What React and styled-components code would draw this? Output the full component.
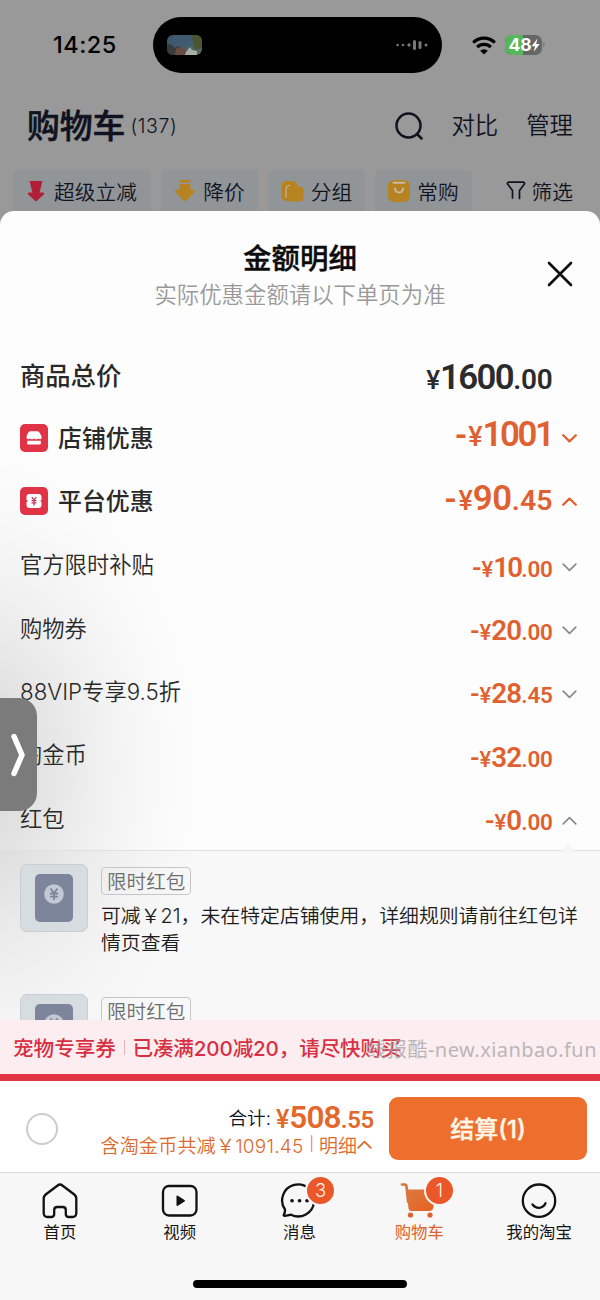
import React from "react";
import styled, { createGlobalStyle } from "styled-components";

const Global = createGlobalStyle`
  *, *::before, *::after { box-sizing: border-box; }
  body { margin: 0; background: #fff; }
`;

const sans = `Inter, "Noto Sans CJK SC", sans-serif`;
const digits = `Roboto, "Liberation Sans", sans-serif`;
const orange = "#e0602f";
const ink = "#10131f";

const Screen = styled.div`
  position: relative;
  width: 600px;
  height: 1300px;
  overflow: hidden;
  display: flex;
  flex-direction: column;
  font-family: ${sans};
  font-weight: 350;
  background: #999;
  color: #222;
  white-space: nowrap;
`;

/* ---------- dimmed cart page ---------- */
const StatusBar = styled.div`
  display: flex;
  align-items: center;
  height: 90px;
  padding: 0 50px 0 53px;
`;
const Clock = styled.div`
  flex: none;
  width: 100px;
  font-size: 23.5px;
  font-weight: 550;
  letter-spacing: 0.5px;
  color: #000;
  line-height: 1;
`;
const Island = styled.div`
  flex: none;
  display: flex;
  align-items: center;
  justify-content: space-between;
  width: 289px;
  height: 56px;
  padding: 0 14px;
  border-radius: 28px;
  background: #000;
`;
const Signals = styled.div`
  display: flex;
  flex: none;
  align-items: center;
  gap: 9px;
  margin-left: 30px;
`;
const TitleBar = styled.div`
  display: flex;
  align-items: center;
  height: 72px;
  padding: 0 27px;
  color: ${ink};
`;
const PageTitle = styled.div`
  font-size: 32.8px;
  font-weight: 500;
  line-height: 1;
  -webkit-text-stroke: 0.6px ${ink};
`;
const Count = styled.div`
  flex: 1;
  margin-left: 5px;
  font-size: 19.5px;
  font-weight: 300;
  letter-spacing: 0.6px;
`;
const TitleLink = styled.div`
  margin-left: 28px;
  font-size: 23.4px;
  line-height: 1;
`;
const Chips = styled.div`
  display: flex;
  height: 49px;
  padding: 8px 27px 0 13px;
  gap: 10px;
  font-size: 20.7px;
  color: ${ink};
`;
const Chip = styled.div`
  display: flex;
  align-items: center;
  justify-content: center;
  gap: ${(p) => p.$gap || 7}px;
  width: ${(p) => p.$w}px;
  height: 43px;
  padding-bottom: 2px;
  border-radius: 5px;
  background: #929597;
`;
const Filter = styled.div`
  display: flex;
  flex: 1;
  align-items: center;
  justify-content: flex-end;
  gap: 6px;
  height: 43px;
  padding-bottom: 2px;
`;

/* ---------- bottom sheet ---------- */
const Sheet = styled.div`
  display: flex;
  flex-direction: column;
  height: 809px;
  border-radius: 14px 14px 0 0;
  background:
    radial-gradient(
      ellipse 230px 330px at -20px 555px,
      rgba(0, 0, 0, 0.15),
      rgba(0, 0, 0, 0.105) 25%,
      rgba(0, 0, 0, 0.05) 52%,
      rgba(0, 0, 0, 0.015) 78%,
      transparent
    ),
    #fdfdfd;
  overflow: hidden;
`;
const SheetHead = styled.div`
  display: grid;
  grid-template-columns: 40px 1fr 40px;
  height: 132px;
  padding: 0 20px;
  text-align: center;
`;
const Titles = styled.div`
  grid-column: 2;
  display: flex;
  flex-direction: column;
  gap: 5px;
  padding-top: 32px;
`;
const SheetTitle = styled.div`
  font-size: 28.5px;
  font-weight: 500;
  line-height: 32px;
  color: #0c0c0c;
  -webkit-text-stroke: 0.4px #0c0c0c;
`;
const SheetNote = styled.div`
  font-size: 22.4px;
  font-weight: 350;
  line-height: 29px;
  color: #999;
`;
const Close = styled.div`
  padding: 50px 0 0 7px;
  text-align: left;
`;
const Row = styled.div`
  display: flex;
  align-items: center;
  height: 63.4px;
  flex: none;
  padding: 0 23px 0 20px;
`;
const Badge = styled.div`
  display: flex;
  align-items: center;
  justify-content: center;
  width: 28px;
  height: 28px;
  margin-right: 10px;
  border-radius: 5px;
  background: #e03446;
`;
const Label = styled.div`
  flex: 1;
  padding-top: 1px;
  font-size: ${(p) => p.$size}px;
  font-weight: ${(p) => (p.$strong ? 500 : 350)};
  line-height: 1;
  color: #292929;
`;
const Price = styled.div`
  display: flex;
  align-items: baseline;
  font-family: ${digits};
  font-weight: 600;
  line-height: 1;
  font-size: ${(p) => p.$big}px;
  letter-spacing: ${(p) => p.$track || 0}px;
  color: ${(p) => p.$color || orange};
  padding-top: ${(p) => Math.max(p.$drop || 0, 0)}px;
  padding-bottom: ${(p) => Math.max(-(p.$drop || 0), 0)}px;
`;
const Small = styled.span`
  font-size: ${(p) => p.$size}px;
  font-weight: ${(p) => p.$weight || 600};
  letter-spacing: ${(p) => p.$track || 0}px;
  margin-right: ${(p) => p.$after || 0}px;
`;
const ChevronSlot = styled.div`
  display: flex;
  justify-content: flex-end;
  width: 24.5px;
  padding-top: ${(p) => p.$drop ?? 5}px;
`;

const Coupons = styled.div`
  position: relative;
  display: flex;
  flex-direction: column;
  gap: 62px;
  flex: 1;
  min-height: 0;
  padding: 13px 20px 0;
  border-top: 1px solid #e0e0e0;
  background: rgba(120, 120, 120, 0.035);
`;
const Pointer = styled.svg`
  position: absolute;
  top: -7px;
  left: 560px;
`;
const Coupon = styled.div`
  display: flex;
  gap: 13px;
  height: 68px;
`;
const CouponThumb = styled.div`
  display: flex;
  align-items: center;
  justify-content: center;
  width: 68px;
  height: 68px;
  flex: none;
  border: 1px solid #c8ced3;
  border-radius: 7px;
  background: #d6dce0;
`;
const CouponBody = styled.div`
  display: flex;
  flex-direction: column;
  align-items: flex-start;
  padding-top: 3px;
`;
const Tag = styled.div`
  height: 28px;
  padding: 0 5px;
  border: 1px solid #c6c6c6;
  border-radius: 4px;
  font-size: 19.6px;
  line-height: 28px;
  color: #6d6d6d;
`;
const CouponText = styled.div`
  margin-top: 8px;
  font-size: 19.87px;
  line-height: 27.3px;
  color: #1c1c1c;
`;

/* ---------- promo, checkout, tabs ---------- */
const Promo = styled.div`
  display: flex;
  align-items: center;
  height: 61px;
  padding: 0 13px;
  border-bottom: 7px solid #e03444;
  background: #fcedf0;
  font-size: 20.6px;
  font-weight: 500;
  color: #d92f42;
`;
const PromoRule = styled.i`
  width: 1px;
  height: 15px;
  margin: 0 7.5px 0 8px;
  background: #eab3ba;
`;
const PromoText = styled.span`
  letter-spacing: -0.15px;
`;
const Checkout = styled.div`
  display: flex;
  align-items: center;
  height: 92px;
  padding: 0 13px 0 26px;
  border-bottom: 1px solid #d8d8d8;
  background: #fff;
`;
const Radio = styled.div`
  width: 32px;
  height: 32px;
  margin-top: 4px;
  border: 2.5px solid #cbcbd0;
  border-radius: 50%;
`;
const Totals = styled.div`
  display: flex;
  flex: 1;
  flex-direction: column;
  align-items: flex-end;
  padding: 6px 15px 0 0;
`;
const TotalLine = styled.div`
  display: flex;
  align-items: center;
  gap: 5px;
  height: 29px;
  font-size: 18.7px;
  color: ${ink};
`;
const SavingLine = styled.div`
  display: flex;
  align-items: center;
  height: 26px;
  padding-right: 2px;
  font-size: 19px;
  color: #dd6a2c;
`;
const SavingRule = styled.span`
  margin: 0 5px 2px 6px;
  font-size: 14px;
`;
const SavingText = styled.span`
  letter-spacing: 0.25px;
`;
const Pay = styled.div`
  display: flex;
  align-items: center;
  justify-content: center;
  width: 198px;
  height: 63px;
  margin-top: 3px;
  padding-bottom: 2px;
  border-radius: 9px;
  background: #ed6e2d;
  font-size: 24px;
  font-weight: 500;
  color: #fff6e8;
  -webkit-text-stroke: 0.4px #fff6e8;
`;
const Tabs = styled.div`
  display: grid;
  grid-template-columns: repeat(5, 119.8px);
  height: 107px;
  background: #f7f7f7;
`;
const Tab = styled.div`
  position: relative;
  display: flex;
  flex-direction: column;
  align-items: center;
  padding-top: 9px;
  font-size: 16.4px;
  font-weight: 400;
  color: ${(p) => (p.$on ? "#e0622c" : "#151515")};
  svg { display: block; }
`;
const TabLabel = styled.div`
  margin-top: 3px;
  line-height: 20px;
`;
const Bubble = styled.div`
  position: absolute;
  top: 2px;
  left: ${(p) => p.$left}px;
  width: 31px;
  height: 31px;
  border: 2px solid #f7f7f7;
  border-radius: 50%;
  background: #ea5729;
  color: #fff3e8;
  font-size: 18.5px;
  font-weight: 350;
  line-height: 27px;
  text-align: center;
`;
const HomeArea = styled.div`
  display: flex;
  justify-content: center;
  height: 20px;
  background: #f7f7f7;
`;
const HomeBar = styled.div`
  width: 214px;
  height: 8px;
  border-radius: 4px;
  background: #000;
`;

/* ---------- floating layers ---------- */
const Drawer = styled.div`
  position: absolute;
  left: 0;
  top: 698px;
  width: 36.5px;
  height: 113px;
  border-radius: 0 18px 18px 0;
  background: #7b7b7b;
`;
const Watermark = styled.div`
  position: absolute;
  right: 3px;
  top: 1036px;
  font-family: "Noto Sans", "Noto Sans CJK SC", sans-serif;
  font-size: 20px;
  font-weight: 400;
  line-height: 28px;
  letter-spacing: 0.45px;
  color: rgba(160, 160, 160, 0.72);
`;

function Chevron({ up, color = "#8a8a8a", w = 15, h = 9, s = 1.7 }) {
  return (
    <svg width={w} height={h} viewBox="0 0 15 9" fill="none" stroke={color} strokeWidth={s} strokeLinecap="round" strokeLinejoin="round">
      <path d={up ? "M1.2 7.8 7.5 1.6 13.8 7.8" : "M1.2 1.2 7.5 7.4 13.8 1.2"} />
    </svg>
  );
}

function Money({ minus, whole, cents, big, sym, small, color, drop, track, dashGap = 0, centTrack = -0.3 }) {
  return (
    <Price $big={big} $color={color} $drop={drop} $track={track}>
      {minus && <Small $size={big * 0.95} $after={dashGap}>-</Small>}
      <Small $size={sym} $weight={500}>¥</Small>
      {whole}
      {cents && <Small $size={small} $track={centTrack}>.{cents}</Small>}
    </Price>
  );
}

const subRows = [
  { label: "官方限时补贴", whole: "10", cents: "00", dir: "down", track: -1.8 },
  { label: "购物券", whole: "20", cents: "00", dir: "down" },
  { label: "88VIP专享9.5折", whole: "28", cents: "45", dir: "down" },
  { label: "淘金币", whole: "32", cents: "00" },
  { label: "红包", whole: "0", cents: "00", dir: "up" },
];

function ShopIcon() {
  return (
    <svg width="18" height="18" viewBox="0 0 18 18" fill="#fff">
      <path d="M5 2.200h8Q15.500 3.500 16.700 7.800q.3 2.400-1.500 2.400-1.200 0-2-.8-.9.900-2 .9-1.200 0-2.100-.9-.9.900-2.100.9-1.100 0-2-.9-.8.800-2 .8-1.800 0-1.500-2.400Q2.500 3.500 5 2.200z" />
      <path d="M2.200 11.800h13.600v2.400q0 1.300-1.300 1.300h-11q-1.300 0-1.300-1.300z" />
    </svg>
  );
}

function TicketIcon() {
  return (
    <svg width="18" height="18" viewBox="0 0 18 18">
      <path fill="#fff" d="M4.500 2h9q3 0 3 3v2.700a1.400 1.400 0 0 0 0 2.600V13q0 3-3 3h-9q-3 0-3-3v-2.700a1.400 1.400 0 0 0 0-2.600V5Q1.500 2 4.500 2z" />
      <path fill="none" stroke="#c03a5a" strokeWidth="1.300" d="M6.800 5.200 9 8.200l2.200-3M9 8v5.500M6.500 8.600h5M6.500 10.900h5" />
    </svg>
  );
}

function Packet() {
  return (
    <svg width="38" height="48" viewBox="0 0 38 48">
      <rect width="38" height="48" rx="5" fill="#7d859b" />
      <circle cx="19" cy="20" r="9.800" fill="#c3c9d3" />
      <path d="M15.500 14.500 19 19l3.500-4.500M19 19v7M15 19.500h8M15 22.700h8" fill="none" stroke="#7d859b" strokeWidth="1.800" />
    </svg>
  );
}

function CouponItem({ children }) {
  return (
    <Coupon>
      <CouponThumb><Packet /></CouponThumb>
      <CouponBody>
        <Tag>限时红包</Tag>
        {children && <CouponText>{children}</CouponText>}
      </CouponBody>
    </Coupon>
  );
}

const line = { fill: "none", stroke: "#111", strokeWidth: 2.3, strokeLinecap: "round", strokeLinejoin: "round" };

export default function App() {
  return (
    <Screen>
      <Global />
      <StatusBar>
        <Clock>14:25</Clock>
        <Island>
          <svg width="35" height="20" viewBox="0 0 35 20">
            <defs>
              <clipPath id="thumb"><rect width="35" height="20" rx="6" /></clipPath>
              <linearGradient id="sky" x1="0" y1="0" x2="1" y2="1">
                <stop offset="0" stopColor="#3c5568" />
                <stop offset=".5" stopColor="#415c72" />
                <stop offset="1" stopColor="#5f6b58" />
              </linearGradient>
            </defs>
            <g clipPath="url(#thumb)">
              <rect width="35" height="20" fill="url(#sky)" />
              <path d="M0 9 5 10l3 3 4-2 5 4 1 5H0z" fill="#373c3b" />
              <path d="M9 14l5-3 5 5v4H8z" fill="#6b4c43" />
              <path d="M25 0h10v13l-6 2-3-6z" fill="#4b5630" />
              <path d="M19 17l4-5 2 3 5 1v4H18z" fill="#a9aea4" />
            </g>
          </svg>
          <svg width="32" height="12" viewBox="0 0 32 12" fill="#777">
            <circle cx="1.600" cy="6" r="1.300" /><circle cx="7" cy="6" r="1.300" /><circle cx="13" cy="6" r="1.700" />
            <rect x="17" y="1" width="3" height="10" rx="1.500" /><rect x="22.500" y="2" width="3" height="8" rx="1.500" /><circle cx="30" cy="6" r="1.500" />
          </svg>
        </Island>
        <Signals>
          <svg width="24" height="19" viewBox="0 0 24 19" fill="none" stroke="#000" strokeWidth="3.200">
            <path d="M1.200 6.600a15.500 15.500 0 0 1 21.600 0" />
            <path d="M5.200 11.200a9.700 9.700 0 0 1 13.600 0" />
            <path d="M12 18.500 8.200 14.700a5.400 5.400 0 0 1 7.600 0z" fill="#000" stroke="none" />
          </svg>
          <svg width="41" height="20" viewBox="0 0 41 20">
            <defs><clipPath id="cell"><rect width="37" height="20" rx="6.500" /></clipPath></defs>
            <g clipPath="url(#cell)">
              <rect width="41" height="20" fill="#666" />
              <rect width="18" height="20" fill="#54b75a" />
            </g>
            <path d="M38.500 7q2 3 0 6z" fill="#666" />
            <text x="3.500" y="16.300" fontFamily="Inter, sans-serif" fontSize="17.500" fontWeight="650" fill="#fff">48</text>
            <path d="M32.500 3.500 26.500 11.200h3.600l-1.400 5.600 6-7.800h-3.600z" fill="#fff" />
          </svg>
        </Signals>
      </StatusBar>

      <TitleBar>
        <PageTitle>购物车</PageTitle>
        <Count>(137)</Count>
        <svg width="28" height="28" viewBox="0 0 28 28" fill="none" stroke={ink} strokeWidth="2.500" strokeLinecap="round">
          <circle cx="13.500" cy="13.500" r="12" /><path d="m22.500 22.500 4 4" />
        </svg>
        <TitleLink>对比</TitleLink>
        <TitleLink>管理</TitleLink>
      </TitleBar>

      <Chips>
        <Chip $w={138} $gap={9}>
          <svg width="18" height="22" viewBox="0 0 18 22" fill="#b01f35"><path d="M2.500 1h13L12.500 12.500h4.200q1 .8.300 1.700L10 20.800q-1 .7-2 0L1 14.200q-.7-.9.300-1.700h4.200z" /></svg>
          超级立减
        </Chip>
        <Chip $w={97}>
          <svg width="22" height="22" viewBox="0 0 22 22" fill="#b78320"><rect x="5.500" y="0" width="11" height="2.500" rx="1" /><path d="M5.500 4h11v6h4q1 .8.300 1.700L12 21q-1 .7-2 0L1 11.700q-.7-.9.300-1.700h4.200z" /></svg>
          降价
        </Chip>
        <Chip $w={97}>
          <svg width="23" height="22" viewBox="0 0 23 22" fill="#b78320"><rect x=".5" y="1" width="16" height="20" rx="5" /><path d="M8 5.500q-2.500.5-2.500 4v8q0 4 4 4h9q4 0 4-4v-7q0-4-4-4h-4l-2-1.300z" /><path d="M5 18V9.500q0-4 4-4.200" fill="none" stroke="#bdb39c" strokeWidth="1.300" /></svg>
          分组
        </Chip>
        <Chip $w={97}>
          <svg width="22" height="22" viewBox="0 0 22 22"><rect width="22" height="22" rx="6" fill="#b78320" /><path d="M5.500 2.800h11M7 8.500q.5 4 4 4t4-4" fill="none" stroke="#c2bbaa" strokeWidth="2" strokeLinecap="round" /></svg>
          常购
        </Chip>
        <Filter>
          <svg width="20" height="19" viewBox="0 0 20 19" {...line} stroke={ink} strokeWidth="1.700"><path d="M6.500 17V9.500L1.600 3Q1 1.500 2.500 1.200h15Q19 1.500 18.400 3L13.500 9.500V17.500" /></svg>
          筛选
        </Filter>
      </Chips>

      <Sheet>
        <SheetHead>
          <Titles>
            <SheetTitle>金额明细</SheetTitle>
            <SheetNote>实际优惠金额请以下单页为准</SheetNote>
          </Titles>
          <Close>
            <svg width="26" height="26" viewBox="0 0 26 26" fill="none" stroke="#0d0d0d" strokeWidth="2.600" strokeLinecap="round"><path d="m2 2 22 22M24 2 2 24" /></svg>
          </Close>
        </SheetHead>

        <Row>
          <Label $size={25.3} $strong>商品总价</Label>
          <Money whole="1600" cents="00" big={34.8} sym={26} small={28} color="#2b2b2d" drop={5} track={-1.6} centTrack={-0.2} />
          <ChevronSlot />
        </Row>
        <Row>
          <Badge><ShopIcon /></Badge>
          <Label $size={23.9} $strong>店铺优惠</Label>
          <Money minus whole="1001" big={34.8} sym={27} drop={-7} track={-2.4} dashGap={1} />
          <ChevronSlot $drop={0}><Chevron color={orange} s={2.2} /></ChevronSlot>
        </Row>
        <Row>
          <Badge><TicketIcon /></Badge>
          <Label $size={23.9} $strong>平台优惠</Label>
          <Money minus whole="90" cents="45" big={34.8} sym={27} small={28.5} drop={-6} track={-0.4} dashGap={2} centTrack={0} />
          <ChevronSlot $drop={0}><Chevron up color={orange} s={2.2} /></ChevronSlot>
        </Row>
        {subRows.map((r) => (
          <Row key={r.label}>
            <Label $size={22.3}>{r.label}</Label>
            <Money minus whole={r.whole} cents={r.cents} big={27.7} sym={22} small={22.5} drop={5} track={r.track || -0.8} />
            <ChevronSlot>{r.dir && <Chevron up={r.dir === "up"} />}</ChevronSlot>
          </Row>
        ))}

        <Coupons>
          <Pointer width="16" height="8" viewBox="0 0 16 8"><path d="M0 8 8 0l8 8z" fill="#f5f5f5" /></Pointer>
          <CouponItem>
            可减￥21，未在特定店铺使用，详细规则请前往红包详
            <br />
            情页查看
          </CouponItem>
          <CouponItem />
        </Coupons>
      </Sheet>

      <Promo>
        宠物专享券
        <PromoRule />
        <PromoText>已凑满200减20，请尽快购买</PromoText>
      </Promo>

      <Checkout>
        <Radio />
        <Totals>
          <TotalLine>
            合计:
            <Money whole="508" cents="55" big={31.5} sym={25} small={24} color="#e2682c" drop={2} track={-0.9} />
          </TotalLine>
          <SavingLine>
            <SavingText>含淘金币共减￥1091.45</SavingText>
            <SavingRule>|</SavingRule>
            <span>明细</span>
            <Chevron up color="#dd6a2c" s={1.8} />
          </SavingLine>
        </Totals>
        <Pay>结算(1)</Pay>
      </Checkout>

      <Tabs>
        <Tab>
          <svg width="38" height="37" viewBox="0 0 38 37" {...line}>
            <path d="M16.600 3.500q2.400-2 4.800 0L33.300 12.500q2 1.600 2 4V31q0 4-4 4h-3.500q-3 0-3-3v-4q0-3-3-3h-5.600q-3 0-3 3v4q0 3-3 3H6.700q-4 0-4-4V16.500q0-2.400 2-4z" />
          </svg>
          <TabLabel>首页</TabLabel>
        </Tab>
        <Tab>
          <svg width="38" height="37" viewBox="0 0 38 37" {...line}>
            <rect x="2" y="4" width="33.500" height="29.500" rx="6" />
            <path d="M15.500 14.500q0-1.500 1.400-.8l6.600 4.200q1.200.8 0 1.600l-6.600 4.200q-1.400.7-1.400-.8z" fill="#111" stroke="none" />
          </svg>
          <TabLabel>视频</TabLabel>
        </Tab>
        <Tab>
          <svg width="38" height="37" viewBox="0 0 38 37" {...line}>
            <path d="M5 27.500A16 16 0 1 1 11 32.700Q8 33.500 4.500 33.800 3.200 33.600 4 32.300 5.200 30.500 5 27.500z" />
            <path d="M12 18.700h.1M19.500 18.700h.1M27 18.700h.1" strokeWidth="3.600" />
          </svg>
          <TabLabel>消息</TabLabel>
          <Bubble $left={65.5}>3</Bubble>
        </Tab>
        <Tab $on>
          <svg width="38" height="37" viewBox="0 0 38 37">
            <defs>
              <linearGradient id="cart" x1="0" y1="0" x2="1" y2="1">
                <stop offset="0" stopColor="#da7a40" /><stop offset="1" stopColor="#e8601f" />
              </linearGradient>
            </defs>
            <path d="M2 2.500h2.500q1.800 0 2 2L8.200 20" fill="none" stroke="#d9733a" strokeWidth="2.600" strokeLinecap="round" />
            <path d="M6.500 7.500h30L33.500 25q-.6 4-4.500 4H11.500q-2.600 0-3-2.600z" fill="url(#cart)" />
            <circle cx="10.500" cy="33" r="2.600" fill="#e0622c" /><circle cx="30" cy="33" r="2.600" fill="#e0622c" />
          </svg>
          <TabLabel>购物车</TabLabel>
          <Bubble $left={64.5}>1</Bubble>
        </Tab>
        <Tab>
          <svg width="38" height="37" viewBox="0 0 38 37" {...line}>
            <circle cx="19" cy="18.700" r="16.200" />
            <path d="M12.500 22.500q3 3.800 7 3.300 4.300-.6 6-4.500" />
          </svg>
          <TabLabel>我的淘宝</TabLabel>
        </Tab>
      </Tabs>
      <HomeArea><HomeBar /></HomeArea>

      <Drawer>
        <svg width="36" height="113" viewBox="0 0 36 113" fill="none" stroke="#fff" strokeWidth="5.500" strokeLinecap="round" strokeLinejoin="round">
          <path d="M14 38.500 22 57l-8 18.500" />
        </svg>
      </Drawer>
      <Watermark>线报酷-new.xianbao.fun</Watermark>
    </Screen>
  );
}
